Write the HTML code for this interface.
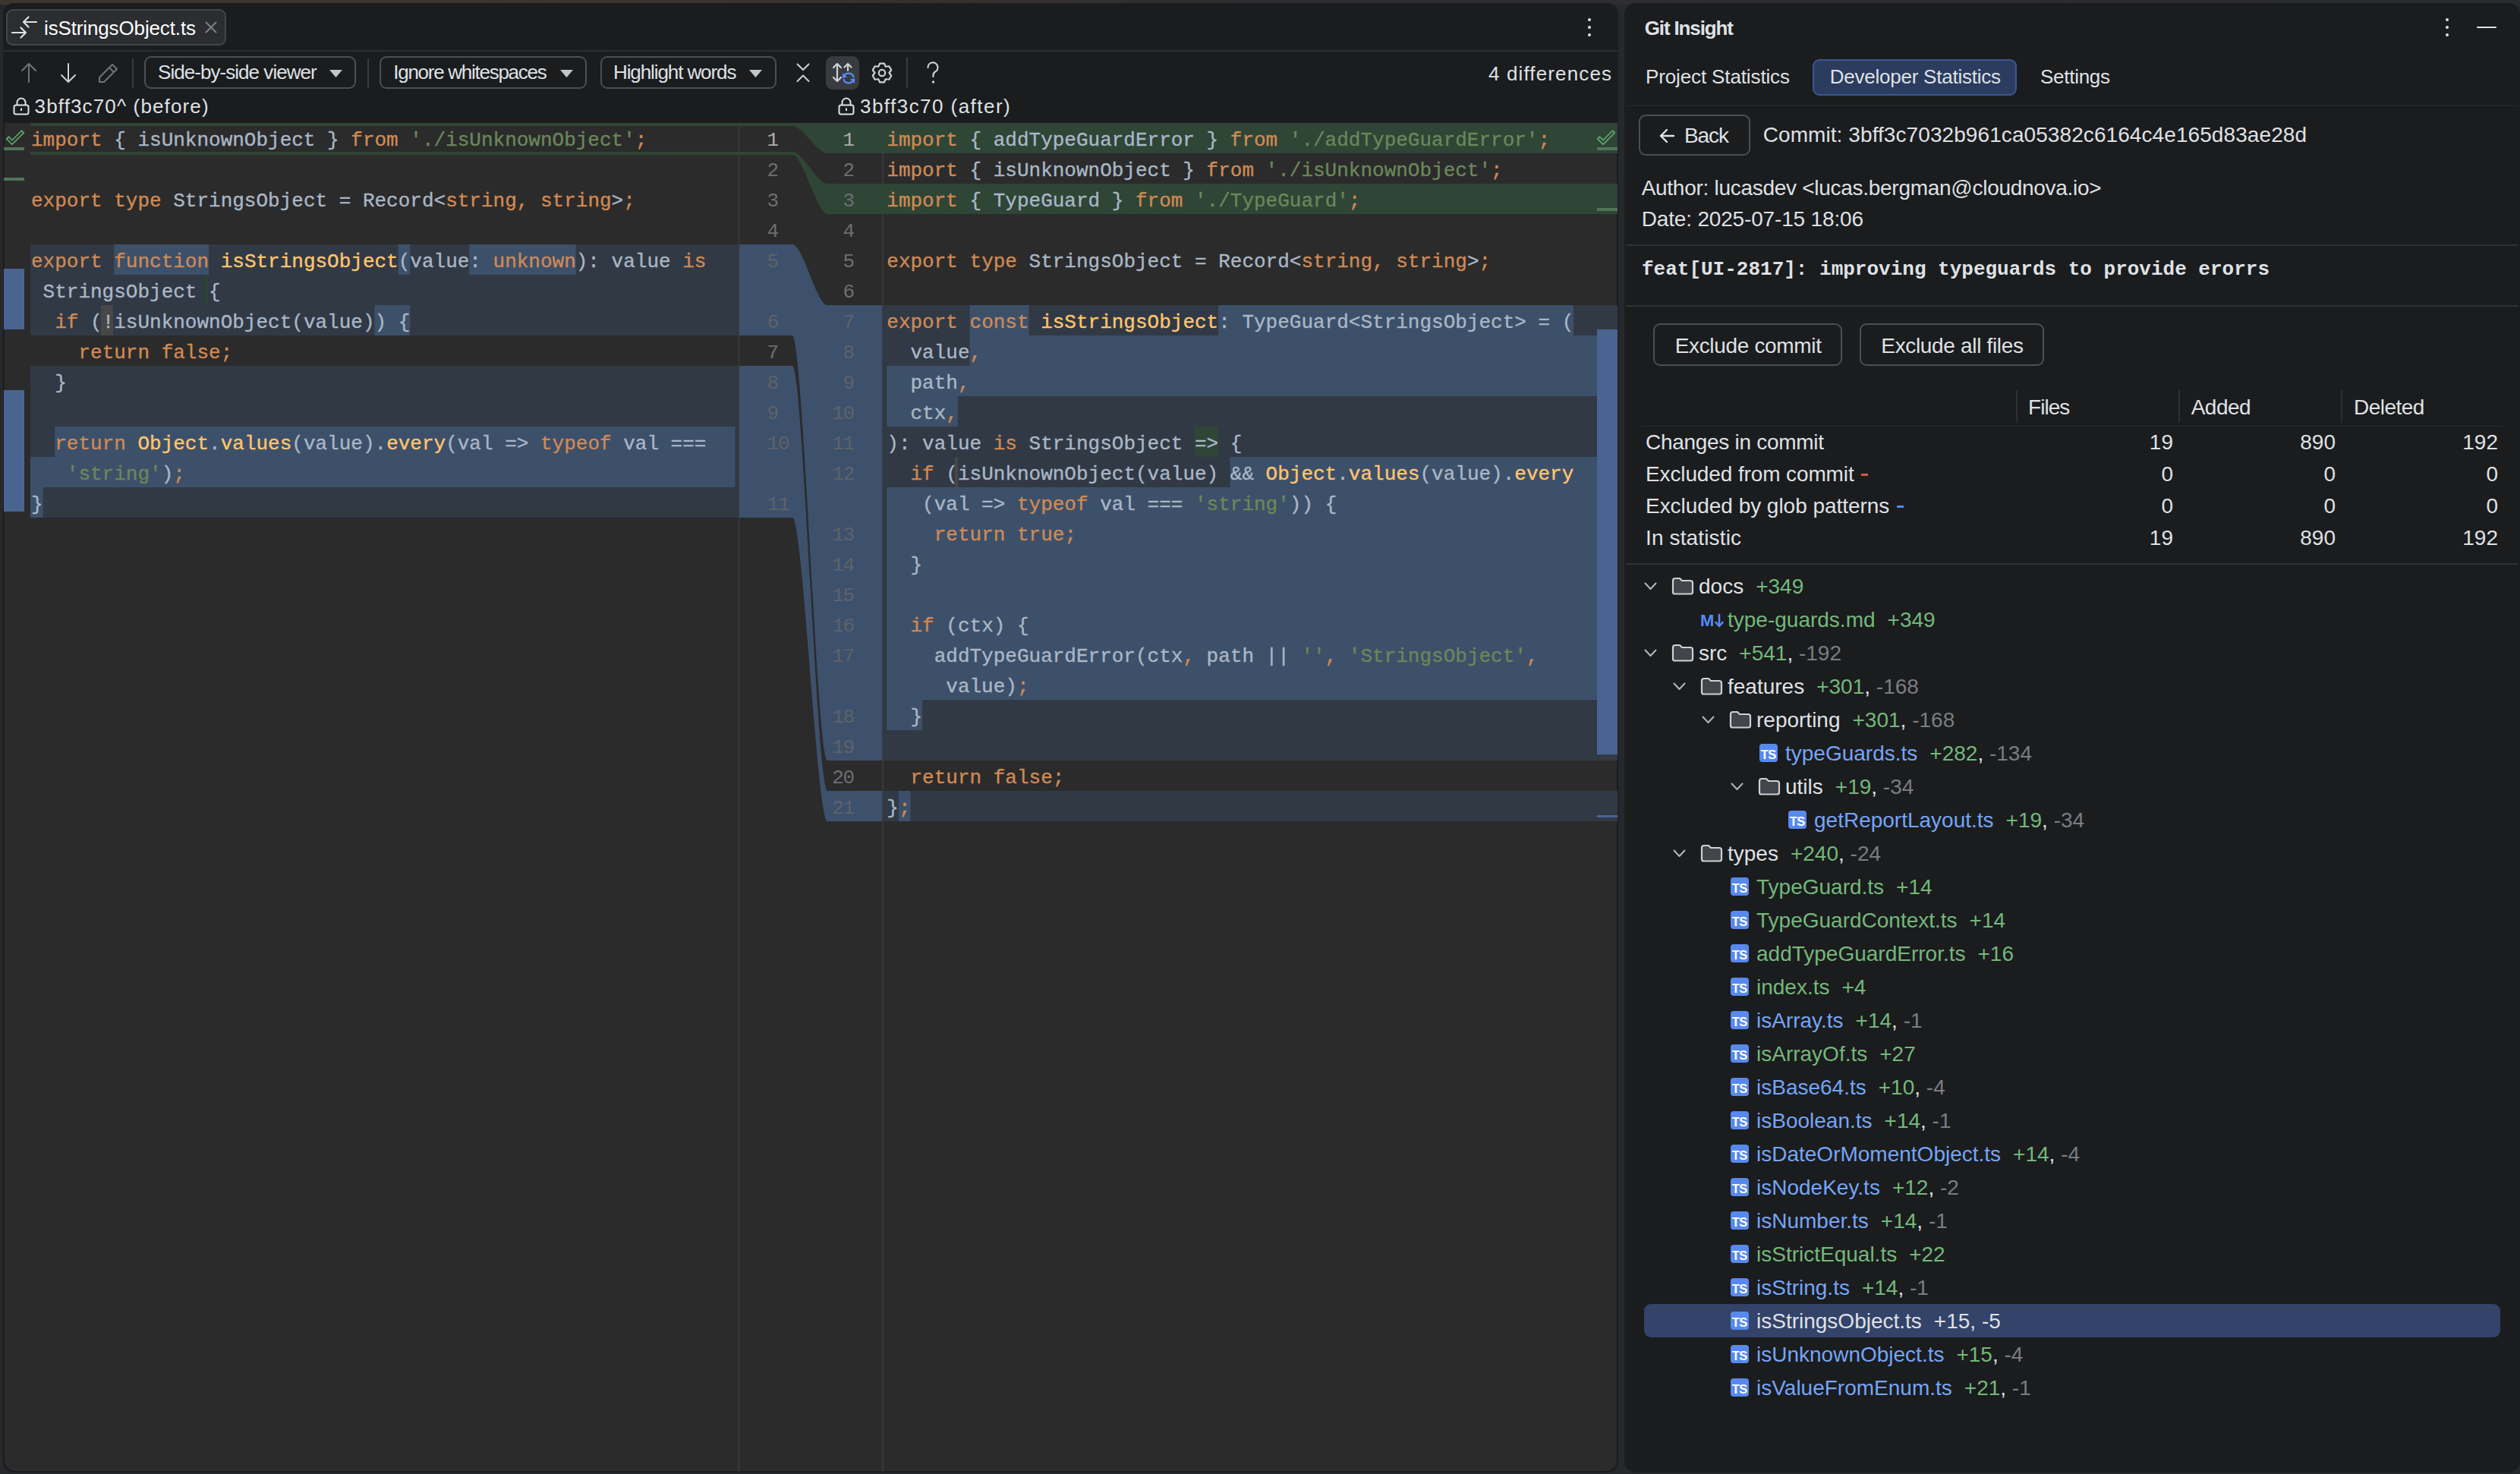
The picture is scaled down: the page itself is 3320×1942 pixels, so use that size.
<!DOCTYPE html><html><head><meta charset="utf-8"><style>
html,body{margin:0;padding:0;}
body{width:3320px;height:1942px;position:relative;overflow:hidden;background:#27282c;font-family:'Liberation Sans', sans-serif;}
.t{position:absolute;white-space:pre;}
.r{position:absolute;}
.code{position:absolute;white-space:pre;font-family:'Liberation Mono', monospace;font-size:26px;line-height:40px;height:40px;color:#a9b7c6;-webkit-text-stroke:0.35px currentColor;}
.k{color:#cf8a55} .f{color:#ffc66d} .s{color:#6a8759}
svg{position:absolute;overflow:visible;}
</style></head><body>
<div class="r" style="left:0.0px;top:0.0px;width:3320.0px;height:6.0px;background:linear-gradient(90deg,#3e352f 0%,#3b332e 25%,#2f2e30 50%,#2a2b2f 100%);"></div>
<div class="r" style="left:3.5px;top:3.5px;width:2128.0px;height:1936.0px;background:#1c1d20;border-radius:15px;"></div>
<div class="r" style="left:3.5px;top:3.5px;width:2128.0px;height:1936.0px;background:#1b1c1e;border-radius:15px;"></div>
<div class="r" style="left:2139.5px;top:3.5px;width:1180.0px;height:1936.0px;background:#1b1c1e;border-radius:15px;"></div>
<div class="r" style="left:8.0px;top:12.0px;width:286.0px;height:44.0px;border:2px solid #43454a;background:#2b2d31;border-radius:9px;"></div>
<svg style="left:14.0px;top:18.0px;" width="40" height="36" viewBox="0 0 40 36">
<g stroke="#dfe1e5" stroke-width="2.2" fill="none" stroke-linecap="round" stroke-linejoin="round">
<path d="M17 11 H34 M23.5 4.5 L17 11 L23.5 17.5"/>
<path d="M2 25 H20 M13.5 18.5 L20 25 L13.5 31.5"/>
</g></svg>
<div id="t1" class="t" style="left:58.0px;top:24.2px;font-size:26px;line-height:26px;color:#ffffff;font-weight:normal;font-family:'Liberation Sans', sans-serif;letter-spacing:-0.135px;">isStringsObject.ts</div>
<svg style="left:270.0px;top:28.0px;" width="16" height="16" viewBox="0 0 16 16"><g stroke="#7e8185" stroke-width="2" stroke-linecap="round"><path d="M1.5 1.5 L14.5 14.5 M14.5 1.5 L1.5 14.5"/></g></svg>
<div class="r" style="left:2091.7px;top:23.7px;width:4.6px;height:4.6px;border-radius:50%;background:#dfe1e5"></div>
<div class="r" style="left:2091.7px;top:33.7px;width:4.6px;height:4.6px;border-radius:50%;background:#dfe1e5"></div>
<div class="r" style="left:2091.7px;top:43.7px;width:4.6px;height:4.6px;border-radius:50%;background:#dfe1e5"></div>
<div class="r" style="left:4.0px;top:66.3px;width:2127.0px;height:2.0px;background:#2b2d30;"></div>
<svg style="left:26.0px;top:82.0px;" width="24" height="28" viewBox="0 0 24 28"><g stroke="#6f737a" stroke-width="2" fill="none" stroke-linecap="round" stroke-linejoin="round"><path d="M12 2 V26 M3 11 L12 2 L21 11"/></g></svg>
<svg style="left:78.0px;top:82.0px;" width="24" height="28" viewBox="0 0 24 28"><g stroke="#ced0d6" stroke-width="2" fill="none" stroke-linecap="round" stroke-linejoin="round"><path d="M12 2 V26 M3 17 L12 26 L21 17"/></g></svg>
<svg style="left:128.0px;top:81.0px;" width="30" height="30" viewBox="0 0 30 30"><g stroke="#6f737a" stroke-width="2" fill="none" stroke-linejoin="round"><path d="M3 21 L20 4 L26 10 L9 27 H3 Z M16 8 L22 14"/></g></svg>
<div class="r" style="left:173.6px;top:77.0px;width:2.0px;height:39.0px;background:#393b40;"></div>
<div class="r" style="left:190.0px;top:74.3px;width:275.0px;height:39.2px;border:2px solid #4b4e54;background:transparent;border-radius:9px;"></div>
<div id="t2" class="t" style="left:208.0px;top:81.5px;font-size:26px;line-height:26px;color:#dfe1e5;font-weight:normal;font-family:'Liberation Sans', sans-serif;letter-spacing:-0.954px;">Side-by-side viewer</div>
<svg style="left:433.5px;top:91.7px;" width="17" height="10" viewBox="0 0 17 10"><path d="M0 0 H17 L8.5 10 Z" fill="#c3c5ca"/></svg>
<div class="r" style="left:483.7px;top:77.0px;width:2.0px;height:39.0px;background:#393b40;"></div>
<div class="r" style="left:500.0px;top:74.3px;width:269.0px;height:39.2px;border:2px solid #4b4e54;background:transparent;border-radius:9px;"></div>
<div id="t3" class="t" style="left:518.3px;top:81.5px;font-size:26px;line-height:26px;color:#dfe1e5;font-weight:normal;font-family:'Liberation Sans', sans-serif;letter-spacing:-1.272px;">Ignore whitespaces</div>
<svg style="left:738.0px;top:91.7px;" width="17" height="10" viewBox="0 0 17 10"><path d="M0 0 H17 L8.5 10 Z" fill="#c3c5ca"/></svg>
<div class="r" style="left:791.0px;top:74.3px;width:228.0px;height:39.2px;border:2px solid #4b4e54;background:transparent;border-radius:9px;"></div>
<div id="t4" class="t" style="left:808.0px;top:81.5px;font-size:26px;line-height:26px;color:#dfe1e5;font-weight:normal;font-family:'Liberation Sans', sans-serif;letter-spacing:-1.096px;">Highlight words</div>
<svg style="left:987.0px;top:91.7px;" width="17" height="10" viewBox="0 0 17 10"><path d="M0 0 H17 L8.5 10 Z" fill="#c3c5ca"/></svg>
<svg style="left:1048.0px;top:82.0px;" width="20" height="28" viewBox="0 0 20 28"><g stroke="#ced0d6" stroke-width="2" fill="none" stroke-linecap="round" stroke-linejoin="round"><path d="M2.5 2.5 L10 10 L17.5 2.5 M2.5 25 L10 17.5 L17.5 25"/></g></svg>
<div class="r" style="left:1088.3px;top:73.7px;width:43.7px;height:44.0px;background:#393b40;border-radius:9px;"></div>
<svg style="left:1094.0px;top:80.0px;" width="36" height="34" viewBox="0 0 36 34">
<g stroke="#ced0d6" stroke-width="2.2" fill="none" stroke-linecap="round" stroke-linejoin="round">
<path d="M9 4 V27 M4 9 L9 4 L14 9 M4 22 L9 27 L14 22"/>
<path d="M23 4 V13 M18.5 8.5 L23 4 L27.5 8.5"/>
</g>
<g stroke="#548af7" stroke-width="2.2" fill="none" stroke-linecap="round">
<path d="M17.5 21 A7 7 0 0 1 30.5 21"/>
<path d="M30.5 25 A7 7 0 0 1 17.5 25"/>
</g>
<path d="M16 16 L16 23 L22 21.5 Z" fill="#548af7"/>
<path d="M32 30 L32 23 L26 24.5 Z" fill="#548af7"/>
</svg>
<svg style="left:1147.0px;top:81.0px;" width="30" height="30" viewBox="0 0 30 30"><g stroke="#ced0d6" stroke-width="2.2" fill="none" stroke-linejoin="round"><path d="M10.25 6.77 L12.12 2.53 L17.88 2.53 L19.75 6.77 L19.75 6.77 L24.36 6.27 L27.24 11.26 L24.50 15.00 L24.50 15.00 L27.24 18.74 L24.36 23.73 L19.75 23.23 L19.75 23.23 L17.88 27.47 L12.12 27.47 L10.25 23.23 L10.25 23.23 L5.64 23.73 L2.76 18.74 L5.50 15.00 L5.50 15.00 L2.76 11.26 L5.64 6.27 L10.25 6.77 Z"/><circle cx="15" cy="15" r="4.2"/></g></svg>
<div class="r" style="left:1194.0px;top:76.0px;width:2.0px;height:40.0px;background:#393b40;"></div>
<svg style="left:1219.5px;top:82.0px;" width="20" height="32" viewBox="0 0 20 32"><g stroke="#ced0d6" stroke-width="2.2" fill="none" stroke-linecap="round"><path d="M2.5 7 A6.5 6.5 0 1 1 11.8 12.8 Q9.5 14.2 9.5 17.5 V19"/></g><circle cx="9.5" cy="26" r="1.7" fill="#ced0d6"/></svg>
<div id="t5" class="t" style="left:1961.0px;top:83.9px;font-size:26px;line-height:26px;color:#dfe1e5;font-weight:normal;font-family:'Liberation Sans', sans-serif;letter-spacing:1.133px;">4 differences</div>
<svg style="left:17.0px;top:128.0px;" width="22" height="24" viewBox="0 0 22 24"><g stroke="#dfe1e5" stroke-width="2" fill="none"><rect x="1.5" y="10.5" width="19" height="12" rx="2.5"/><path d="M5.5 10.5 V7 A5.5 5.5 0 0 1 16.5 7 V10.5"/><path d="M11 14.5 V18"/></g></svg>
<div id="t6" class="t" style="left:45.6px;top:127.2px;font-size:26px;line-height:26px;color:#dfe1e5;font-weight:normal;font-family:'Liberation Sans', sans-serif;letter-spacing:1.132px;">3bff3c70^ (before)</div>
<svg style="left:1104.0px;top:128.0px;" width="22" height="24" viewBox="0 0 22 24"><g stroke="#dfe1e5" stroke-width="2" fill="none"><rect x="1.5" y="10.5" width="19" height="12" rx="2.5"/><path d="M5.5 10.5 V7 A5.5 5.5 0 0 1 16.5 7 V10.5"/><path d="M11 14.5 V18"/></g></svg>
<div id="t7" class="t" style="left:1133.0px;top:127.2px;font-size:26px;line-height:26px;color:#dfe1e5;font-weight:normal;font-family:'Liberation Sans', sans-serif;letter-spacing:1.455px;">3bff3c70 (after)</div>
<div class="r" style="left:5.5px;top:162px;width:2124.5px;height:1775.5px;background:#2b2b2b;border-radius:0 0 14px 14px;"></div>
<svg style="left:0;top:0" width="3320" height="1942" viewBox="0 0 3320 1942"><rect x="40.0" y="322.0" width="934.0" height="40.0" fill="#313945"/><rect x="40.0" y="362.0" width="934.0" height="40.0" fill="#313945"/><rect x="40.0" y="402.0" width="934.0" height="40.0" fill="#313945"/><rect x="40.0" y="482.0" width="934.0" height="40.0" fill="#313945"/><rect x="40.0" y="522.0" width="934.0" height="40.0" fill="#313945"/><rect x="40.0" y="562.0" width="934.0" height="40.0" fill="#313945"/><rect x="40.0" y="602.0" width="934.0" height="40.0" fill="#313945"/><rect x="40.0" y="642.0" width="934.0" height="40.0" fill="#313945"/><rect x="150.2" y="322.0" width="124.8" height="40.0" fill="#3d506a"/><rect x="524.6" y="322.0" width="15.6" height="40.0" fill="#3d506a"/><rect x="618.2" y="322.0" width="140.4" height="40.0" fill="#3d506a"/><rect x="133.0" y="402.0" width="16.0" height="40.0" fill="#474747"/><rect x="270.0" y="362.0" width="4.0" height="40.0" fill="#2d4433"/><rect x="493.4" y="402.0" width="46.8" height="40.0" fill="#3d506a"/><rect x="72.2" y="562.0" width="896.3" height="40.0" fill="#3d506a"/><rect x="40.0" y="602.0" width="928.5" height="40.0" fill="#3d506a"/><rect x="40.0" y="642.0" width="16.6" height="40.0" fill="#3d506a"/><rect x="972.5" y="162.0" width="2.0" height="1777.0" fill="#393939"/><rect x="1162.0" y="162.0" width="2.0" height="1777.0" fill="#393939"/><rect x="40.0" y="162.0" width="1004.0" height="4.0" fill="#2f4536"/><rect x="40.0" y="200.0" width="1004.0" height="4.0" fill="#2f4536"/><rect x="974.0" y="322.0" width="70.0" height="120.0" fill="#3d516d"/><rect x="974.0" y="482.0" width="70.0" height="200.0" fill="#3d516d"/><rect x="1090.0" y="162.0" width="1041.0" height="40.0" fill="#2f4536"/><rect x="1090.0" y="242.0" width="1041.0" height="40.0" fill="#2f4536"/><rect x="1163.0" y="402.0" width="968.0" height="40.0" fill="#313945"/><rect x="1163.0" y="442.0" width="968.0" height="40.0" fill="#313945"/><rect x="1163.0" y="482.0" width="968.0" height="40.0" fill="#313945"/><rect x="1163.0" y="522.0" width="968.0" height="40.0" fill="#313945"/><rect x="1163.0" y="562.0" width="968.0" height="40.0" fill="#313945"/><rect x="1163.0" y="602.0" width="968.0" height="40.0" fill="#313945"/><rect x="1163.0" y="642.0" width="968.0" height="40.0" fill="#313945"/><rect x="1163.0" y="682.0" width="968.0" height="40.0" fill="#313945"/><rect x="1163.0" y="722.0" width="968.0" height="40.0" fill="#313945"/><rect x="1163.0" y="762.0" width="968.0" height="40.0" fill="#313945"/><rect x="1163.0" y="802.0" width="968.0" height="40.0" fill="#313945"/><rect x="1163.0" y="842.0" width="968.0" height="40.0" fill="#313945"/><rect x="1163.0" y="882.0" width="968.0" height="40.0" fill="#313945"/><rect x="1163.0" y="922.0" width="968.0" height="40.0" fill="#313945"/><rect x="1163.0" y="962.0" width="968.0" height="40.0" fill="#313945"/><rect x="1163.0" y="1042.0" width="968.0" height="40.0" fill="#313945"/><rect x="1277.5" y="402.0" width="78.0" height="40.0" fill="#3d506a"/><rect x="1605.1" y="402.0" width="468.0" height="40.0" fill="#3d506a"/><rect x="1277.5" y="442.0" width="853.5" height="40.0" fill="#3d506a"/><rect x="1168.3" y="482.0" width="962.7" height="40.0" fill="#3d506a"/><rect x="1168.3" y="522.0" width="93.6" height="40.0" fill="#3d506a"/><rect x="1573.9" y="562.0" width="31.2" height="40.0" fill="#2f4536"/><rect x="1620.7" y="602.0" width="510.3" height="40.0" fill="#3d506a"/><rect x="1258.0" y="602.0" width="4.0" height="40.0" fill="#474747"/><rect x="1168.3" y="642.0" width="962.7" height="40.0" fill="#3d506a"/><rect x="1168.3" y="682.0" width="962.7" height="40.0" fill="#3d506a"/><rect x="1168.3" y="722.0" width="962.7" height="40.0" fill="#3d506a"/><rect x="1168.3" y="762.0" width="962.7" height="40.0" fill="#3d506a"/><rect x="1168.3" y="802.0" width="962.7" height="40.0" fill="#3d506a"/><rect x="1168.3" y="842.0" width="962.7" height="40.0" fill="#3d506a"/><rect x="1168.3" y="882.0" width="962.7" height="40.0" fill="#3d506a"/><rect x="1168.3" y="922.0" width="46.8" height="40.0" fill="#3d506a"/><rect x="1183.9" y="1042.0" width="15.6" height="40.0" fill="#3d506a"/><rect x="1090.0" y="402.0" width="72.0" height="600.0" fill="#3d516d"/><rect x="1090.0" y="1042.0" width="72.0" height="40.0" fill="#3d516d"/><path d="M1044 162 C1057.8 162 1076.2 162 1090 162 L1090 202 C1076.2 202 1057.8 166 1044 166 Z" fill="#2f4536"/><path d="M1044 200 C1057.8 200 1076.2 242 1090 242 L1090 282 C1076.2 282 1057.8 204 1044 204 Z" fill="#2f4536"/><path d="M1044 322 C1057.8 322 1076.2 402 1090 402 L1090 1002 C1076.2 1002 1057.8 442 1044 442 Z" fill="#3d516d"/><path d="M1044 482 C1057.8 482 1076.2 1042 1090 1042 L1090 1082 C1076.2 1082 1057.8 682 1044 682 Z" fill="#3d516d"/><rect x="5.0" y="354.0" width="27.0" height="80.0" fill="#4a6491"/><rect x="5.0" y="514.0" width="27.0" height="160.0" fill="#4a6491"/><rect x="5.0" y="194.0" width="27.0" height="4.0" fill="#4f7558"/><rect x="5.0" y="234.0" width="27.0" height="4.0" fill="#4f7558"/><rect x="2104.0" y="434.0" width="27.0" height="560.0" fill="#4a6491"/><rect x="2104.0" y="1074.0" width="27.0" height="3.0" fill="#4a6491"/><rect x="2104.0" y="194.0" width="27.0" height="4.0" fill="#4f7558"/><rect x="2104.0" y="274.0" width="27.0" height="4.0" fill="#4f7558"/></svg>
<svg style="left:7.0px;top:169.5px;" width="26" height="22" viewBox="0 0 26 22"><path d="M2.5 11 L9 17.5 L23.5 3" stroke="#62a36b" stroke-width="5.6" fill="none" stroke-linejoin="miter"/><path d="M3.9 12.4 L9 17.5 L22.1 4.4" stroke="#2b2b2b" stroke-width="2.2" fill="none" stroke-linejoin="miter"/></svg>
<svg style="left:2103.0px;top:169.5px;" width="26" height="22" viewBox="0 0 26 22"><path d="M2.5 11 L9 17.5 L23.5 3" stroke="#62a36b" stroke-width="5.6" fill="none" stroke-linejoin="miter"/><path d="M3.9 12.4 L9 17.5 L22.1 4.4" stroke="#2f4536" stroke-width="2.2" fill="none" stroke-linejoin="miter"/></svg>
<div class="code" style="left:41.0px;top:165.2px"><span class="k">import</span> { isUnknownObject } <span class="k">from</span> <span class="s">&#x27;./isUnknownObject&#x27;</span><span class="k">;</span></div>
<div class="code" style="left:41.0px;top:245.2px"><span class="k">export</span> <span class="k">type</span> StringsObject = Record&lt;<span class="k">string</span><span class="k">,</span> <span class="k">string</span>&gt;<span class="k">;</span></div>
<div class="code" style="left:41.0px;top:325.2px"><span class="k">export</span> <span class="k">function</span> <span class="f">isStringsObject</span>(value: <span class="k">unknown</span>): value <span class="k">is</span></div>
<div class="code" style="left:41.0px;top:365.2px"> StringsObject {</div>
<div class="code" style="left:41.0px;top:405.2px">  <span class="k">if</span> (!isUnknownObject(value)) {</div>
<div class="code" style="left:41.0px;top:445.2px">    <span class="k">return</span> <span class="k">false</span><span class="k">;</span></div>
<div class="code" style="left:41.0px;top:485.2px">  }</div>
<div class="code" style="left:41.0px;top:565.2px">  <span class="k">return</span> <span class="f">Object</span>.<span class="f">values</span>(value).<span class="f">every</span>(val =&gt; <span class="k">typeof</span> val ===</div>
<div class="code" style="left:41.0px;top:605.2px">   <span class="s">&#x27;string&#x27;</span>)<span class="k">;</span></div>
<div class="code" style="left:41.0px;top:645.2px">}</div>
<div class="code" style="left:1168.3px;top:165.2px"><span class="k">import</span> { addTypeGuardError } <span class="k">from</span> <span class="s">&#x27;./addTypeGuardError&#x27;</span><span class="k">;</span></div>
<div class="code" style="left:1168.3px;top:205.2px"><span class="k">import</span> { isUnknownObject } <span class="k">from</span> <span class="s">&#x27;./isUnknownObject&#x27;</span><span class="k">;</span></div>
<div class="code" style="left:1168.3px;top:245.2px"><span class="k">import</span> { TypeGuard } <span class="k">from</span> <span class="s">&#x27;./TypeGuard&#x27;</span><span class="k">;</span></div>
<div class="code" style="left:1168.3px;top:325.2px"><span class="k">export</span> <span class="k">type</span> StringsObject = Record&lt;<span class="k">string</span><span class="k">,</span> <span class="k">string</span>&gt;<span class="k">;</span></div>
<div class="code" style="left:1168.3px;top:405.2px"><span class="k">export</span> <span class="k">const</span> <span class="f">isStringsObject</span>: TypeGuard&lt;StringsObject&gt; = (</div>
<div class="code" style="left:1168.3px;top:445.2px">  value<span class="k">,</span></div>
<div class="code" style="left:1168.3px;top:485.2px">  path<span class="k">,</span></div>
<div class="code" style="left:1168.3px;top:525.2px">  ctx<span class="k">,</span></div>
<div class="code" style="left:1168.3px;top:565.2px">): value <span class="k">is</span> StringsObject =&gt; {</div>
<div class="code" style="left:1168.3px;top:605.2px">  <span class="k">if</span> (isUnknownObject(value) &amp;&amp; <span class="f">Object</span>.<span class="f">values</span>(value).<span class="f">every</span></div>
<div class="code" style="left:1168.3px;top:645.2px">   (val =&gt; <span class="k">typeof</span> val === <span class="s">&#x27;string&#x27;</span>)) {</div>
<div class="code" style="left:1168.3px;top:685.2px">    <span class="k">return</span> <span class="k">true</span><span class="k">;</span></div>
<div class="code" style="left:1168.3px;top:725.2px">  }</div>
<div class="code" style="left:1168.3px;top:805.2px">  <span class="k">if</span> (ctx) {</div>
<div class="code" style="left:1168.3px;top:845.2px">    addTypeGuardError(ctx<span class="k">,</span> path || <span class="s">&#x27;&#x27;</span><span class="k">,</span> <span class="s">&#x27;StringsObject&#x27;</span><span class="k">,</span></div>
<div class="code" style="left:1168.3px;top:885.2px">     value)<span class="k">;</span></div>
<div class="code" style="left:1168.3px;top:925.2px">  }</div>
<div class="code" style="left:1168.3px;top:1005.2px">  <span class="k">return</span> <span class="k">false</span><span class="k">;</span></div>
<div class="code" style="left:1168.3px;top:1045.2px">}<span class="k">;</span></div>
<div class="code" style="left:1010.5px;top:165.2px;letter-spacing:-1.2px;-webkit-text-stroke:0;color:#adadad">1</div>
<div class="code" style="left:1010.5px;top:205.2px;letter-spacing:-1.2px;-webkit-text-stroke:0;color:#6c6e72">2</div>
<div class="code" style="left:1010.5px;top:245.2px;letter-spacing:-1.2px;-webkit-text-stroke:0;color:#6c6e72">3</div>
<div class="code" style="left:1010.5px;top:285.2px;letter-spacing:-1.2px;-webkit-text-stroke:0;color:#6c6e72">4</div>
<div class="code" style="left:1010.5px;top:325.2px;letter-spacing:-1.2px;-webkit-text-stroke:0;color:#5f6267">5</div>
<div class="code" style="left:1010.5px;top:405.2px;letter-spacing:-1.2px;-webkit-text-stroke:0;color:#5f6267">6</div>
<div class="code" style="left:1010.5px;top:445.2px;letter-spacing:-1.2px;-webkit-text-stroke:0;color:#6c6e72">7</div>
<div class="code" style="left:1010.5px;top:485.2px;letter-spacing:-1.2px;-webkit-text-stroke:0;color:#5f6267">8</div>
<div class="code" style="left:1010.5px;top:525.2px;letter-spacing:-1.2px;-webkit-text-stroke:0;color:#5f6267">9</div>
<div class="code" style="left:1010.5px;top:565.2px;letter-spacing:-1.2px;-webkit-text-stroke:0;color:#5f6267">10</div>
<div class="code" style="left:1010.5px;top:645.2px;letter-spacing:-1.2px;-webkit-text-stroke:0;color:#5f6267">11</div>
<div class="code" style="left:1110.6px;top:165.2px;letter-spacing:-1.2px;-webkit-text-stroke:0;color:#adadad">1</div>
<div class="code" style="left:1110.6px;top:205.2px;letter-spacing:-1.2px;-webkit-text-stroke:0;color:#6c6e72">2</div>
<div class="code" style="left:1110.6px;top:245.2px;letter-spacing:-1.2px;-webkit-text-stroke:0;color:#6c6e72">3</div>
<div class="code" style="left:1110.6px;top:285.2px;letter-spacing:-1.2px;-webkit-text-stroke:0;color:#6c6e72">4</div>
<div class="code" style="left:1110.6px;top:325.2px;letter-spacing:-1.2px;-webkit-text-stroke:0;color:#6c6e72">5</div>
<div class="code" style="left:1110.6px;top:365.2px;letter-spacing:-1.2px;-webkit-text-stroke:0;color:#6c6e72">6</div>
<div class="code" style="left:1110.6px;top:405.2px;letter-spacing:-1.2px;-webkit-text-stroke:0;color:#5f6267">7</div>
<div class="code" style="left:1110.6px;top:445.2px;letter-spacing:-1.2px;-webkit-text-stroke:0;color:#5f6267">8</div>
<div class="code" style="left:1110.6px;top:485.2px;letter-spacing:-1.2px;-webkit-text-stroke:0;color:#5f6267">9</div>
<div class="code" style="left:1096.2px;top:525.2px;letter-spacing:-1.2px;-webkit-text-stroke:0;color:#5f6267">10</div>
<div class="code" style="left:1096.2px;top:565.2px;letter-spacing:-1.2px;-webkit-text-stroke:0;color:#5f6267">11</div>
<div class="code" style="left:1096.2px;top:605.2px;letter-spacing:-1.2px;-webkit-text-stroke:0;color:#5f6267">12</div>
<div class="code" style="left:1096.2px;top:685.2px;letter-spacing:-1.2px;-webkit-text-stroke:0;color:#5f6267">13</div>
<div class="code" style="left:1096.2px;top:725.2px;letter-spacing:-1.2px;-webkit-text-stroke:0;color:#5f6267">14</div>
<div class="code" style="left:1096.2px;top:765.2px;letter-spacing:-1.2px;-webkit-text-stroke:0;color:#5f6267">15</div>
<div class="code" style="left:1096.2px;top:805.2px;letter-spacing:-1.2px;-webkit-text-stroke:0;color:#5f6267">16</div>
<div class="code" style="left:1096.2px;top:845.2px;letter-spacing:-1.2px;-webkit-text-stroke:0;color:#5f6267">17</div>
<div class="code" style="left:1096.2px;top:925.2px;letter-spacing:-1.2px;-webkit-text-stroke:0;color:#5f6267">18</div>
<div class="code" style="left:1096.2px;top:965.2px;letter-spacing:-1.2px;-webkit-text-stroke:0;color:#5f6267">19</div>
<div class="code" style="left:1096.2px;top:1005.2px;letter-spacing:-1.2px;-webkit-text-stroke:0;color:#6c6e72">20</div>
<div class="code" style="left:1096.2px;top:1045.2px;letter-spacing:-1.2px;-webkit-text-stroke:0;color:#5f6267">21</div>
<div id="t8" class="t" style="left:2166.7px;top:23.6px;font-size:26px;line-height:26px;color:#dfe1e5;font-weight:bold;font-family:'Liberation Sans', sans-serif;letter-spacing:-1.125px;">Git Insight</div>
<div class="r" style="left:3221.7px;top:23.7px;width:4.6px;height:4.6px;border-radius:50%;background:#dfe1e5"></div>
<div class="r" style="left:3221.7px;top:33.7px;width:4.6px;height:4.6px;border-radius:50%;background:#dfe1e5"></div>
<div class="r" style="left:3221.7px;top:43.7px;width:4.6px;height:4.6px;border-radius:50%;background:#dfe1e5"></div>
<div class="r" style="left:3263.0px;top:34.8px;width:26.0px;height:2.4px;background:#dfe1e5;border-radius:1px;"></div>
<div id="t9" class="t" style="left:2168.0px;top:87.9px;font-size:26px;line-height:26px;color:#dfe1e5;font-weight:normal;font-family:'Liberation Sans', sans-serif;letter-spacing:-0.128px;">Project Statistics</div>
<div class="r" style="left:2388.0px;top:78.0px;width:265.0px;height:44.0px;border:2px solid #3a5793;background:#2b3c5f;border-radius:9px;"></div>
<div id="t10" class="t" style="left:2410.7px;top:87.9px;font-size:26px;line-height:26px;color:#dfe1e5;font-weight:normal;font-family:'Liberation Sans', sans-serif;letter-spacing:-0.235px;">Developer Statistics</div>
<div id="t11" class="t" style="left:2688.0px;top:87.9px;font-size:26px;line-height:26px;color:#dfe1e5;font-weight:normal;font-family:'Liberation Sans', sans-serif;letter-spacing:-0.279px;">Settings</div>
<div class="r" style="left:2142.0px;top:137.5px;width:1176.0px;height:2.0px;background:#232427;"></div>
<div class="r" style="left:2158.5px;top:150.7px;width:143.5px;height:50.3px;border:2px solid #4b4e54;background:transparent;border-radius:9px;"></div>
<svg style="left:2186.0px;top:169.0px;" width="22" height="20" viewBox="0 0 22 20"><g stroke="#dfe1e5" stroke-width="2.4" fill="none" stroke-linecap="round" stroke-linejoin="round"><path d="M2 10 H19 M10 2 L2 10 L10 18"/></g></svg>
<div id="t12" class="t" style="left:2219.0px;top:165.2px;font-size:28px;line-height:28px;color:#dfe1e5;font-weight:normal;font-family:'Liberation Sans', sans-serif;letter-spacing:-1.083px;">Back</div>
<div id="t13" class="t" style="left:2322.7px;top:163.7px;font-size:28px;line-height:28px;color:#dfe1e5;font-weight:normal;font-family:'Liberation Sans', sans-serif;letter-spacing:0.081px;">Commit: 3bff3c7032b961ca05382c6164c4e165d83ae28d</div>
<div id="t14" class="t" style="left:2162.7px;top:234.2px;font-size:28px;line-height:28px;color:#dfe1e5;font-weight:normal;font-family:'Liberation Sans', sans-serif;letter-spacing:-0.281px;">Author: lucasdev &lt;lucas.bergman@cloudnova.io&gt;</div>
<div id="t15" class="t" style="left:2162.7px;top:275.2px;font-size:28px;line-height:28px;color:#dfe1e5;font-weight:normal;font-family:'Liberation Sans', sans-serif;letter-spacing:-0.166px;">Date: 2025-07-15 18:06</div>
<div class="r" style="left:2142.0px;top:322.0px;width:1176.0px;height:2.0px;background:#2f3033;"></div>
<div id="t16" class="t" style="left:2163.0px;top:342.2px;font-size:26px;line-height:26px;color:#dfe1e5;font-weight:bold;font-family:'Liberation Mono', monospace;letter-spacing:0.001px;">feat[UI-2817]: improving typeguards to provide erorrs</div>
<div class="r" style="left:2142.0px;top:402.0px;width:1176.0px;height:2.0px;background:#2f3033;"></div>
<div class="r" style="left:2178.0px;top:426.0px;width:245.0px;height:52.0px;border:2px solid #4b4e54;background:transparent;border-radius:9px;"></div>
<div id="t17" class="t" style="left:2206.7px;top:442.2px;font-size:28px;line-height:28px;color:#dfe1e5;font-weight:normal;font-family:'Liberation Sans', sans-serif;letter-spacing:-0.333px;">Exclude commit</div>
<div class="r" style="left:2450.0px;top:426.0px;width:239.0px;height:52.0px;border:2px solid #4b4e54;background:transparent;border-radius:9px;"></div>
<div id="t18" class="t" style="left:2478.3px;top:442.2px;font-size:28px;line-height:28px;color:#dfe1e5;font-weight:normal;font-family:'Liberation Sans', sans-serif;letter-spacing:-0.330px;">Exclude all files</div>
<div class="r" style="left:2655.7px;top:514.0px;width:2.0px;height:43.0px;background:#2e2f33;"></div>
<div class="r" style="left:2869.7px;top:514.0px;width:2.0px;height:43.0px;background:#2e2f33;"></div>
<div class="r" style="left:3083.9px;top:514.0px;width:2.0px;height:43.0px;background:#2e2f33;"></div>
<div id="t19" class="t" style="left:2672.0px;top:523.2px;font-size:28px;line-height:28px;color:#dfe1e5;font-weight:normal;font-family:'Liberation Sans', sans-serif;letter-spacing:-0.948px;">Files</div>
<div id="t20" class="t" style="left:2886.7px;top:523.2px;font-size:28px;line-height:28px;color:#dfe1e5;font-weight:normal;font-family:'Liberation Sans', sans-serif;letter-spacing:-0.528px;">Added</div>
<div id="t21" class="t" style="left:3101.0px;top:523.2px;font-size:28px;line-height:28px;color:#dfe1e5;font-weight:normal;font-family:'Liberation Sans', sans-serif;letter-spacing:-0.512px;">Deleted</div>
<div class="r" style="left:2162.0px;top:560.0px;width:1136.0px;height:1.5px;background:#232427;"></div>
<div id="t22" class="t" style="left:2168.0px;top:569.2px;font-size:28px;line-height:28px;color:#dfe1e5;font-weight:normal;font-family:'Liberation Sans', sans-serif;letter-spacing:-0.291px;">Changes in commit</div>
<div class="t" style="right:457.0px;top:569.2px;font-size:28px;line-height:28px;color:#dfe1e5;">19</div>
<div class="t" style="right:243.0px;top:569.2px;font-size:28px;line-height:28px;color:#dfe1e5;">890</div>
<div class="t" style="right:29.0px;top:569.2px;font-size:28px;line-height:28px;color:#dfe1e5;">192</div>
<div id="t23" class="t" style="left:2168.0px;top:611.2px;font-size:28px;line-height:28px;color:#dfe1e5;font-weight:normal;font-family:'Liberation Sans', sans-serif;letter-spacing:-0.121px;">Excluded from commit</div>
<div class="r" style="left:2451.7px;top:624.0px;width:9.0px;height:3.0px;background:#e5534b;"></div>
<div class="t" style="right:457.0px;top:611.2px;font-size:28px;line-height:28px;color:#dfe1e5;">0</div>
<div class="t" style="right:243.0px;top:611.2px;font-size:28px;line-height:28px;color:#dfe1e5;">0</div>
<div class="t" style="right:29.0px;top:611.2px;font-size:28px;line-height:28px;color:#dfe1e5;">0</div>
<div id="t24" class="t" style="left:2168.0px;top:653.2px;font-size:28px;line-height:28px;color:#dfe1e5;font-weight:normal;font-family:'Liberation Sans', sans-serif;letter-spacing:-0.037px;">Excluded by glob patterns</div>
<div class="r" style="left:2499.0px;top:666.0px;width:9.0px;height:3.0px;background:#548af7;"></div>
<div class="t" style="right:457.0px;top:653.2px;font-size:28px;line-height:28px;color:#dfe1e5;">0</div>
<div class="t" style="right:243.0px;top:653.2px;font-size:28px;line-height:28px;color:#dfe1e5;">0</div>
<div class="t" style="right:29.0px;top:653.2px;font-size:28px;line-height:28px;color:#dfe1e5;">0</div>
<div id="t25" class="t" style="left:2168.0px;top:695.2px;font-size:28px;line-height:28px;color:#dfe1e5;font-weight:normal;font-family:'Liberation Sans', sans-serif;letter-spacing:0.138px;">In statistic</div>
<div class="t" style="right:457.0px;top:695.2px;font-size:28px;line-height:28px;color:#dfe1e5;">19</div>
<div class="t" style="right:243.0px;top:695.2px;font-size:28px;line-height:28px;color:#dfe1e5;">890</div>
<div class="t" style="right:29.0px;top:695.2px;font-size:28px;line-height:28px;color:#dfe1e5;">192</div>
<div class="r" style="left:2142.0px;top:741.5px;width:1176.0px;height:2.0px;background:#2f3033;"></div>
<div class="r" style="left:2165.8px;top:1718.0px;width:1128.2px;height:44.0px;background:#334369;border-radius:9px;"></div>
<svg style="left:2166.0px;top:767.0px;" width="18" height="12" viewBox="0 0 18 12"><path d="M1.5 1.5 L8.5 9 L15.5 1.5" stroke="#b4b6bb" stroke-width="2" fill="none" stroke-linecap="round" stroke-linejoin="round"/></svg>
<svg style="left:2202.0px;top:760.0px;" width="30" height="24" viewBox="0 0 30 24"><path d="M2 5 Q2 2 5 2 H11 L14 5 H25 Q28 5 28 8 V20 Q28 22.5 25.5 22.5 H4.5 Q2 22.5 2 20 Z" fill="#43454a" stroke="#ced0d6" stroke-width="2.2" stroke-linejoin="round"/></svg>
<div class="t" style="left:2238.0px;top:759.2px;font-size:28px;line-height:28px;"><span style="color:#dfe1e5">docs</span><span style="color:#73b87b;margin-left:16px">+349</span></div>
<div class="t" style="left:2240.0px;top:807.3px;font-size:22px;line-height:22px;color:#548af7;font-weight:bold;font-family:'Liberation Sans', sans-serif;">M</div>
<svg style="left:2259.0px;top:809.0px;" width="14" height="19" viewBox="0 0 14 19"><path d="M6 1 V16 M1.5 11 L6 16 L10.5 11" stroke="#548af7" stroke-width="2.6" fill="none" stroke-linecap="round" stroke-linejoin="round"/></svg>
<div class="t" style="left:2276.0px;top:803.2px;font-size:28px;line-height:28px;"><span style="color:#73b87b">type-guards.md</span><span style="color:#73b87b;margin-left:16px">+349</span></div>
<svg style="left:2166.0px;top:855.0px;" width="18" height="12" viewBox="0 0 18 12"><path d="M1.5 1.5 L8.5 9 L15.5 1.5" stroke="#b4b6bb" stroke-width="2" fill="none" stroke-linecap="round" stroke-linejoin="round"/></svg>
<svg style="left:2202.0px;top:848.0px;" width="30" height="24" viewBox="0 0 30 24"><path d="M2 5 Q2 2 5 2 H11 L14 5 H25 Q28 5 28 8 V20 Q28 22.5 25.5 22.5 H4.5 Q2 22.5 2 20 Z" fill="#43454a" stroke="#ced0d6" stroke-width="2.2" stroke-linejoin="round"/></svg>
<div class="t" style="left:2238.0px;top:847.2px;font-size:28px;line-height:28px;"><span style="color:#dfe1e5">src</span><span style="color:#73b87b;margin-left:16px">+541</span><span style="color:#dfe1e5">, </span><span style="color:#7a7d82">-192</span></div>
<svg style="left:2204.0px;top:899.0px;" width="18" height="12" viewBox="0 0 18 12"><path d="M1.5 1.5 L8.5 9 L15.5 1.5" stroke="#b4b6bb" stroke-width="2" fill="none" stroke-linecap="round" stroke-linejoin="round"/></svg>
<svg style="left:2240.0px;top:892.0px;" width="30" height="24" viewBox="0 0 30 24"><path d="M2 5 Q2 2 5 2 H11 L14 5 H25 Q28 5 28 8 V20 Q28 22.5 25.5 22.5 H4.5 Q2 22.5 2 20 Z" fill="#43454a" stroke="#ced0d6" stroke-width="2.2" stroke-linejoin="round"/></svg>
<div class="t" style="left:2276.0px;top:891.2px;font-size:28px;line-height:28px;"><span style="color:#dfe1e5">features</span><span style="color:#73b87b;margin-left:16px">+301</span><span style="color:#dfe1e5">, </span><span style="color:#7a7d82">-168</span></div>
<svg style="left:2242.0px;top:943.0px;" width="18" height="12" viewBox="0 0 18 12"><path d="M1.5 1.5 L8.5 9 L15.5 1.5" stroke="#b4b6bb" stroke-width="2" fill="none" stroke-linecap="round" stroke-linejoin="round"/></svg>
<svg style="left:2278.0px;top:936.0px;" width="30" height="24" viewBox="0 0 30 24"><path d="M2 5 Q2 2 5 2 H11 L14 5 H25 Q28 5 28 8 V20 Q28 22.5 25.5 22.5 H4.5 Q2 22.5 2 20 Z" fill="#43454a" stroke="#ced0d6" stroke-width="2.2" stroke-linejoin="round"/></svg>
<div class="t" style="left:2314.0px;top:935.2px;font-size:28px;line-height:28px;"><span style="color:#dfe1e5">reporting</span><span style="color:#73b87b;margin-left:16px">+301</span><span style="color:#dfe1e5">, </span><span style="color:#7a7d82">-168</span></div>
<svg style="left:2318.0px;top:980.0px;" width="24" height="24" viewBox="0 0 24 24"><rect x="0" y="0" width="24" height="24" rx="4" fill="#5889ee"/><text x="11.8" y="20" text-anchor="middle" font-family="Liberation Sans" font-weight="bold" font-size="16.5" letter-spacing="-0.6" fill="#ffffff">TS</text></svg>
<div class="t" style="left:2352.0px;top:979.2px;font-size:28px;line-height:28px;"><span style="color:#74a5f6">typeGuards.ts</span><span style="color:#73b87b;margin-left:16px">+282</span><span style="color:#dfe1e5">, </span><span style="color:#7a7d82">-134</span></div>
<svg style="left:2280.0px;top:1031.0px;" width="18" height="12" viewBox="0 0 18 12"><path d="M1.5 1.5 L8.5 9 L15.5 1.5" stroke="#b4b6bb" stroke-width="2" fill="none" stroke-linecap="round" stroke-linejoin="round"/></svg>
<svg style="left:2316.0px;top:1024.0px;" width="30" height="24" viewBox="0 0 30 24"><path d="M2 5 Q2 2 5 2 H11 L14 5 H25 Q28 5 28 8 V20 Q28 22.5 25.5 22.5 H4.5 Q2 22.5 2 20 Z" fill="#43454a" stroke="#ced0d6" stroke-width="2.2" stroke-linejoin="round"/></svg>
<div class="t" style="left:2352.0px;top:1023.2px;font-size:28px;line-height:28px;"><span style="color:#dfe1e5">utils</span><span style="color:#73b87b;margin-left:16px">+19</span><span style="color:#dfe1e5">, </span><span style="color:#7a7d82">-34</span></div>
<svg style="left:2356.0px;top:1068.0px;" width="24" height="24" viewBox="0 0 24 24"><rect x="0" y="0" width="24" height="24" rx="4" fill="#5889ee"/><text x="11.8" y="20" text-anchor="middle" font-family="Liberation Sans" font-weight="bold" font-size="16.5" letter-spacing="-0.6" fill="#ffffff">TS</text></svg>
<div class="t" style="left:2390.0px;top:1067.2px;font-size:28px;line-height:28px;"><span style="color:#74a5f6">getReportLayout.ts</span><span style="color:#73b87b;margin-left:16px">+19</span><span style="color:#dfe1e5">, </span><span style="color:#7a7d82">-34</span></div>
<svg style="left:2204.0px;top:1119.0px;" width="18" height="12" viewBox="0 0 18 12"><path d="M1.5 1.5 L8.5 9 L15.5 1.5" stroke="#b4b6bb" stroke-width="2" fill="none" stroke-linecap="round" stroke-linejoin="round"/></svg>
<svg style="left:2240.0px;top:1112.0px;" width="30" height="24" viewBox="0 0 30 24"><path d="M2 5 Q2 2 5 2 H11 L14 5 H25 Q28 5 28 8 V20 Q28 22.5 25.5 22.5 H4.5 Q2 22.5 2 20 Z" fill="#43454a" stroke="#ced0d6" stroke-width="2.2" stroke-linejoin="round"/></svg>
<div class="t" style="left:2276.0px;top:1111.2px;font-size:28px;line-height:28px;"><span style="color:#dfe1e5">types</span><span style="color:#73b87b;margin-left:16px">+240</span><span style="color:#dfe1e5">, </span><span style="color:#7a7d82">-24</span></div>
<svg style="left:2280.0px;top:1156.0px;" width="24" height="24" viewBox="0 0 24 24"><rect x="0" y="0" width="24" height="24" rx="4" fill="#5889ee"/><text x="11.8" y="20" text-anchor="middle" font-family="Liberation Sans" font-weight="bold" font-size="16.5" letter-spacing="-0.6" fill="#ffffff">TS</text></svg>
<div class="t" style="left:2314.0px;top:1155.2px;font-size:28px;line-height:28px;"><span style="color:#73b87b">TypeGuard.ts</span><span style="color:#73b87b;margin-left:16px">+14</span></div>
<svg style="left:2280.0px;top:1200.0px;" width="24" height="24" viewBox="0 0 24 24"><rect x="0" y="0" width="24" height="24" rx="4" fill="#5889ee"/><text x="11.8" y="20" text-anchor="middle" font-family="Liberation Sans" font-weight="bold" font-size="16.5" letter-spacing="-0.6" fill="#ffffff">TS</text></svg>
<div class="t" style="left:2314.0px;top:1199.2px;font-size:28px;line-height:28px;"><span style="color:#73b87b">TypeGuardContext.ts</span><span style="color:#73b87b;margin-left:16px">+14</span></div>
<svg style="left:2280.0px;top:1244.0px;" width="24" height="24" viewBox="0 0 24 24"><rect x="0" y="0" width="24" height="24" rx="4" fill="#5889ee"/><text x="11.8" y="20" text-anchor="middle" font-family="Liberation Sans" font-weight="bold" font-size="16.5" letter-spacing="-0.6" fill="#ffffff">TS</text></svg>
<div class="t" style="left:2314.0px;top:1243.2px;font-size:28px;line-height:28px;"><span style="color:#73b87b">addTypeGuardError.ts</span><span style="color:#73b87b;margin-left:16px">+16</span></div>
<svg style="left:2280.0px;top:1288.0px;" width="24" height="24" viewBox="0 0 24 24"><rect x="0" y="0" width="24" height="24" rx="4" fill="#5889ee"/><text x="11.8" y="20" text-anchor="middle" font-family="Liberation Sans" font-weight="bold" font-size="16.5" letter-spacing="-0.6" fill="#ffffff">TS</text></svg>
<div class="t" style="left:2314.0px;top:1287.2px;font-size:28px;line-height:28px;"><span style="color:#73b87b">index.ts</span><span style="color:#73b87b;margin-left:16px">+4</span></div>
<svg style="left:2280.0px;top:1332.0px;" width="24" height="24" viewBox="0 0 24 24"><rect x="0" y="0" width="24" height="24" rx="4" fill="#5889ee"/><text x="11.8" y="20" text-anchor="middle" font-family="Liberation Sans" font-weight="bold" font-size="16.5" letter-spacing="-0.6" fill="#ffffff">TS</text></svg>
<div class="t" style="left:2314.0px;top:1331.2px;font-size:28px;line-height:28px;"><span style="color:#74a5f6">isArray.ts</span><span style="color:#73b87b;margin-left:16px">+14</span><span style="color:#dfe1e5">, </span><span style="color:#7a7d82">-1</span></div>
<svg style="left:2280.0px;top:1376.0px;" width="24" height="24" viewBox="0 0 24 24"><rect x="0" y="0" width="24" height="24" rx="4" fill="#5889ee"/><text x="11.8" y="20" text-anchor="middle" font-family="Liberation Sans" font-weight="bold" font-size="16.5" letter-spacing="-0.6" fill="#ffffff">TS</text></svg>
<div class="t" style="left:2314.0px;top:1375.2px;font-size:28px;line-height:28px;"><span style="color:#73b87b">isArrayOf.ts</span><span style="color:#73b87b;margin-left:16px">+27</span></div>
<svg style="left:2280.0px;top:1420.0px;" width="24" height="24" viewBox="0 0 24 24"><rect x="0" y="0" width="24" height="24" rx="4" fill="#5889ee"/><text x="11.8" y="20" text-anchor="middle" font-family="Liberation Sans" font-weight="bold" font-size="16.5" letter-spacing="-0.6" fill="#ffffff">TS</text></svg>
<div class="t" style="left:2314.0px;top:1419.2px;font-size:28px;line-height:28px;"><span style="color:#74a5f6">isBase64.ts</span><span style="color:#73b87b;margin-left:16px">+10</span><span style="color:#dfe1e5">, </span><span style="color:#7a7d82">-4</span></div>
<svg style="left:2280.0px;top:1464.0px;" width="24" height="24" viewBox="0 0 24 24"><rect x="0" y="0" width="24" height="24" rx="4" fill="#5889ee"/><text x="11.8" y="20" text-anchor="middle" font-family="Liberation Sans" font-weight="bold" font-size="16.5" letter-spacing="-0.6" fill="#ffffff">TS</text></svg>
<div class="t" style="left:2314.0px;top:1463.2px;font-size:28px;line-height:28px;"><span style="color:#74a5f6">isBoolean.ts</span><span style="color:#73b87b;margin-left:16px">+14</span><span style="color:#dfe1e5">, </span><span style="color:#7a7d82">-1</span></div>
<svg style="left:2280.0px;top:1508.0px;" width="24" height="24" viewBox="0 0 24 24"><rect x="0" y="0" width="24" height="24" rx="4" fill="#5889ee"/><text x="11.8" y="20" text-anchor="middle" font-family="Liberation Sans" font-weight="bold" font-size="16.5" letter-spacing="-0.6" fill="#ffffff">TS</text></svg>
<div class="t" style="left:2314.0px;top:1507.2px;font-size:28px;line-height:28px;"><span style="color:#74a5f6">isDateOrMomentObject.ts</span><span style="color:#73b87b;margin-left:16px">+14</span><span style="color:#dfe1e5">, </span><span style="color:#7a7d82">-4</span></div>
<svg style="left:2280.0px;top:1552.0px;" width="24" height="24" viewBox="0 0 24 24"><rect x="0" y="0" width="24" height="24" rx="4" fill="#5889ee"/><text x="11.8" y="20" text-anchor="middle" font-family="Liberation Sans" font-weight="bold" font-size="16.5" letter-spacing="-0.6" fill="#ffffff">TS</text></svg>
<div class="t" style="left:2314.0px;top:1551.2px;font-size:28px;line-height:28px;"><span style="color:#74a5f6">isNodeKey.ts</span><span style="color:#73b87b;margin-left:16px">+12</span><span style="color:#dfe1e5">, </span><span style="color:#7a7d82">-2</span></div>
<svg style="left:2280.0px;top:1596.0px;" width="24" height="24" viewBox="0 0 24 24"><rect x="0" y="0" width="24" height="24" rx="4" fill="#5889ee"/><text x="11.8" y="20" text-anchor="middle" font-family="Liberation Sans" font-weight="bold" font-size="16.5" letter-spacing="-0.6" fill="#ffffff">TS</text></svg>
<div class="t" style="left:2314.0px;top:1595.2px;font-size:28px;line-height:28px;"><span style="color:#74a5f6">isNumber.ts</span><span style="color:#73b87b;margin-left:16px">+14</span><span style="color:#dfe1e5">, </span><span style="color:#7a7d82">-1</span></div>
<svg style="left:2280.0px;top:1640.0px;" width="24" height="24" viewBox="0 0 24 24"><rect x="0" y="0" width="24" height="24" rx="4" fill="#5889ee"/><text x="11.8" y="20" text-anchor="middle" font-family="Liberation Sans" font-weight="bold" font-size="16.5" letter-spacing="-0.6" fill="#ffffff">TS</text></svg>
<div class="t" style="left:2314.0px;top:1639.2px;font-size:28px;line-height:28px;"><span style="color:#73b87b">isStrictEqual.ts</span><span style="color:#73b87b;margin-left:16px">+22</span></div>
<svg style="left:2280.0px;top:1684.0px;" width="24" height="24" viewBox="0 0 24 24"><rect x="0" y="0" width="24" height="24" rx="4" fill="#5889ee"/><text x="11.8" y="20" text-anchor="middle" font-family="Liberation Sans" font-weight="bold" font-size="16.5" letter-spacing="-0.6" fill="#ffffff">TS</text></svg>
<div class="t" style="left:2314.0px;top:1683.2px;font-size:28px;line-height:28px;"><span style="color:#74a5f6">isString.ts</span><span style="color:#73b87b;margin-left:16px">+14</span><span style="color:#dfe1e5">, </span><span style="color:#7a7d82">-1</span></div>
<svg style="left:2280.0px;top:1728.0px;" width="24" height="24" viewBox="0 0 24 24"><rect x="0" y="0" width="24" height="24" rx="4" fill="#5889ee"/><text x="11.8" y="20" text-anchor="middle" font-family="Liberation Sans" font-weight="bold" font-size="16.5" letter-spacing="-0.6" fill="#ffffff">TS</text></svg>
<div class="t" style="left:2314.0px;top:1727.2px;font-size:28px;line-height:28px;"><span style="color:#dfe1e5">isStringsObject.ts</span><span style="color:#dfe1e5;margin-left:16px">+15</span><span style="color:#dfe1e5">, </span><span style="color:#dfe1e5">-5</span></div>
<svg style="left:2280.0px;top:1772.0px;" width="24" height="24" viewBox="0 0 24 24"><rect x="0" y="0" width="24" height="24" rx="4" fill="#5889ee"/><text x="11.8" y="20" text-anchor="middle" font-family="Liberation Sans" font-weight="bold" font-size="16.5" letter-spacing="-0.6" fill="#ffffff">TS</text></svg>
<div class="t" style="left:2314.0px;top:1771.2px;font-size:28px;line-height:28px;"><span style="color:#74a5f6">isUnknownObject.ts</span><span style="color:#73b87b;margin-left:16px">+15</span><span style="color:#dfe1e5">, </span><span style="color:#7a7d82">-4</span></div>
<svg style="left:2280.0px;top:1816.0px;" width="24" height="24" viewBox="0 0 24 24"><rect x="0" y="0" width="24" height="24" rx="4" fill="#5889ee"/><text x="11.8" y="20" text-anchor="middle" font-family="Liberation Sans" font-weight="bold" font-size="16.5" letter-spacing="-0.6" fill="#ffffff">TS</text></svg>
<div class="t" style="left:2314.0px;top:1815.2px;font-size:28px;line-height:28px;"><span style="color:#74a5f6">isValueFromEnum.ts</span><span style="color:#73b87b;margin-left:16px">+21</span><span style="color:#dfe1e5">, </span><span style="color:#7a7d82">-1</span></div>
</body></html>
